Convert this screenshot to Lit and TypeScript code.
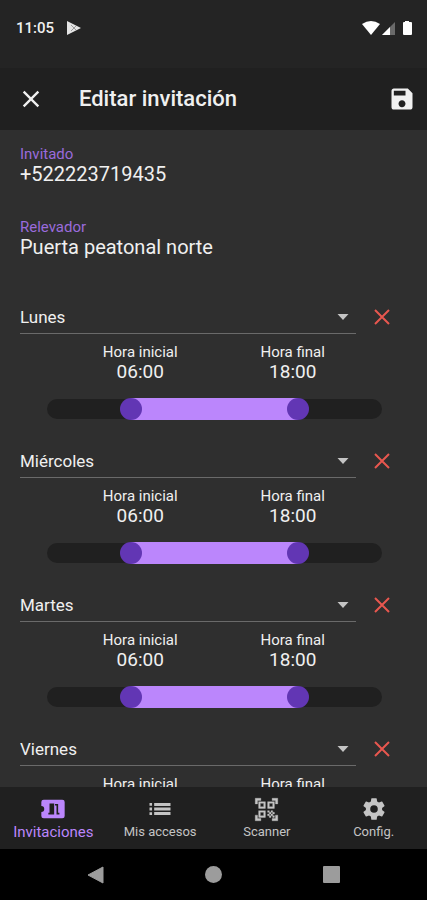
import { LitElement, html, css, svg } from "lit";
import { customElement, property, state } from "lit/decorators.js";
import { classMap } from "lit/directives/class-map.js";

const icons = {
  close: svg`<path d="M19 6.41 17.59 5 12 10.59 6.41 5 5 6.41 10.59 12 5 17.59 6.41 19 12 13.41 17.59 19 19 17.59 13.41 12z"/>`,
  save: svg`<path d="M17 3H5c-1.11 0-2 .9-2 2v14c0 1.1.89 2 2 2h14c1.1 0 2-.9 2-2V7l-4-4zm-5 16c-1.66 0-3-1.34-3-3s1.34-3 3-3 3 1.34 3 3-1.34 3-3 3zm3-10H5V5h10v4z"/>`,
  ticket: svg`<path fill-rule="evenodd" d="M4 4H20a2 2 0 0 1 2 2V18a2 2 0 0 1-2 2H4a2 2 0 0 1-2-2V14.500a2.500 2.500 0 0 0 0-5V6a2 2 0 0 1 2-2zM9 7.200V15.200H8V16.800H13V7.200zM13.700 7.700V8.900H15V16.800H17.500V15.200H16.400V7.700z"/>`,
  list: svg`<path d="M3 6.800h2.200v2.400H3zM3 10.800h2.200v2.400H3zM3 14.800h2.200v2.400H3zM7 6.800h14v2.600H7zM7 10.700h14v2.600H7zM7 14.600h14v2.600H7z"/>`,
  scan: svg`<path d="M9.500 6.500v3h-3v-3h3M11 5H5v6h6V5zm-1.500 9.500v3h-3v-3h3M11 13H5v6h6v-6zm6.500-6.500v3h-3v-3h3M19 5h-6v6h6V5zm-6 8h1.500v1.500H13V13zm1.500 1.500H16V16h-1.500v-1.500zM16 13h1.500v1.500H16V13zm-3 3h1.500v1.500H13V16zm1.500 1.500H16V19h-1.500v-1.500zM16 16h1.500v1.500H16V16zm1.500-1.500H19V16h-1.500v-1.500zm0 3H19V19h-1.500v-1.500zM22 7h-2V4h-3V2h5v5zm0 15v-5h-2v3h-3v2h5zM2 22h5v-2H4v-3H2v5zM2 2v5h2V4h3V2H2z" stroke="currentColor" stroke-width=".3"/>`,
  gear: svg`<path d="M12,15.5A3.5,3.5 0 0,1 8.5,12A3.5,3.5 0 0,1 12,8.5A3.5,3.5 0 0,1 15.5,12A3.5,3.5 0 0,1 12,15.5M19.43,12.97C19.47,12.65 19.5,12.33 19.5,12C19.5,11.67 19.47,11.34 19.43,11L21.54,9.37C21.73,9.22 21.78,8.95 21.66,8.73L19.66,5.27C19.54,5.05 19.27,4.96 19.05,5.05L16.56,6.05C16.04,5.66 15.5,5.32 14.87,5.07L14.5,2.42C14.46,2.18 14.25,2 14,2H10C9.75,2 9.54,2.18 9.5,2.42L9.13,5.07C8.5,5.32 7.96,5.66 7.44,6.05L4.95,5.05C4.73,4.96 4.46,5.05 4.34,5.27L2.34,8.73C2.21,8.95 2.27,9.22 2.46,9.37L4.57,11C4.53,11.34 4.5,11.67 4.5,12C4.5,12.33 4.53,12.65 4.57,12.97L2.46,14.63C2.27,14.78 2.21,15.05 2.34,15.27L4.34,18.73C4.46,18.95 4.73,19.03 4.95,18.95L7.44,17.94C7.96,18.34 8.5,18.68 9.13,18.93L9.5,21.58C9.54,21.82 9.75,22 10,22H14C14.25,22 14.46,21.82 14.5,21.58L14.87,18.93C15.5,18.67 16.04,18.34 16.56,17.94L19.05,18.95C19.27,19.03 19.54,18.95 19.66,18.73L21.66,15.27C21.78,15.05 21.73,14.78 21.54,14.63L19.43,12.97Z"/>`,
};

const icon = (name: keyof typeof icons, size: number) =>
  html`<svg width=${size} height=${size} viewBox="0 0 24 24" fill="currentColor" aria-hidden="true">${icons[name]}</svg>`;

const DAYS = ["Lunes", "Martes", "Miércoles", "Jueves", "Viernes", "Sábado", "Domingo"];

const clock = (hour: number) => `${String(hour).padStart(2, "0")}:00`;

@customElement("day-schedule")
class DaySchedule extends LitElement {
  @property() day = "Lunes";
  @state() from = 6;
  @state() to = 18;

  static styles = css`
    :host {
      display: block;
      padding-bottom: 24px;
    }
    .head {
      display: flex;
      height: 34px;
    }
    .pick {
      position: relative;
      flex: 1;
      display: flex;
      border-bottom: 1px solid #6a6a6a;
    }
    select {
      flex: 1;
      appearance: none;
      border: 0;
      padding: 0 24px 0 0;
      background: transparent;
      color: #f0f0f0;
      font: 17px Roboto, sans-serif;
      outline: none;
    }
    option {
      background: #2f2f2f;
    }
    .caret {
      position: absolute;
      right: 7px;
      top: 14px;
      pointer-events: none;
    }
    .remove {
      display: flex;
      align-items: center;
      justify-content: center;
      width: 51px;
      border: 0;
      padding: 0;
      background: transparent;
      color: #e8574f;
    }
    .hours {
      display: grid;
      grid-template-columns: 1fr 1fr;
      margin: 9px 38px 15px 44px;
      text-align: center;
      color: #f0f0f0;
    }
    .label {
      display: block;
      font-size: 15px;
      line-height: 18px;
    }
    .time {
      display: block;
      font-size: 19px;
      line-height: 22px;
    }
    .slider {
      position: relative;
      display: flex;
      align-items: center;
      height: 22px;
      margin: 0 25px 0 27px;
    }
    .track {
      flex: 1;
      height: 20px;
      border-radius: 10px;
      background: #202020;
    }
    .fill {
      position: absolute;
      top: 0;
      bottom: 0;
      background: #bb86fc;
    }
    input {
      position: absolute;
      left: -11px;
      top: 0;
      width: calc(100% + 22px);
      height: 22px;
      margin: 0;
      appearance: none;
      background: transparent;
      pointer-events: none;
      outline: none;
    }
    input::-webkit-slider-thumb {
      appearance: none;
      width: 22px;
      height: 22px;
      border-radius: 50%;
      background: #6236b4;
      pointer-events: auto;
    }
  `;

  render() {
    const left = (this.from / 24) * 100;
    const right = 100 - (this.to / 24) * 100;
    return html`
      <div class="head">
        <div class="pick">
          <select aria-label="Día">
            ${DAYS.map((d) => html`<option ?selected=${d === this.day}>${d}</option>`)}
          </select>
          <svg class="caret" width="12" height="6" viewBox="0 0 12 6" aria-hidden="true">
            <path d="M.5 0H11.500L6 6z" fill="#c4c4c4" />
          </svg>
        </div>
        <button class="remove" aria-label="Quitar día">
          <svg width="16" height="16" viewBox="0 0 16 16" fill="none" stroke="currentColor" stroke-width="2" aria-hidden="true">
            <path d="M1 1 15 15M15 1 1 15" />
          </svg>
        </button>
      </div>
      <div class="hours">
        <label for="from"><span class="label">Hora inicial</span><span class="time">${clock(this.from)}</span></label>
        <label for="to"><span class="label">Hora final</span><span class="time">${clock(this.to)}</span></label>
      </div>
      <div class="slider">
        <div class="track"></div>
        <div class="fill" style="left:${left}%;right:${right}%"></div>
        <input id="from" type="range" min="0" max="24" .value=${String(this.from)}
          @input=${(e: Event) => (this.from = Math.min(this.to, +(e.target as HTMLInputElement).value))} />
        <input id="to" type="range" min="0" max="24" .value=${String(this.to)}
          @input=${(e: Event) => (this.to = Math.max(this.from, +(e.target as HTMLInputElement).value))} />
      </div>
    `;
  }
}

@customElement("app-root")
class AppRoot extends LitElement {
  @state() tab = "Invitaciones";

  static styles = css`
    :host {
      display: flex;
      flex-direction: column;
      height: 100vh;
      background: #2f2f2f;
      color: #f0f0f0;
      font-family: Roboto, sans-serif;
    }
    button {
      border: 0;
      padding: 0;
      background: transparent;
      color: inherit;
      font-family: inherit;
    }
    svg {
      display: block;
    }
    .status {
      display: flex;
      align-items: center;
      flex: none;
      height: 40px;
      padding: 8px 15px 20px 16px;
      background: #242424;
    }
    .clock {
      font-size: 15px;
      font-weight: 500;
      line-height: 20px;
    }
    .play {
      margin-left: 13px;
      margin-right: auto;
    }
    .bar {
      display: flex;
      align-items: center;
      flex: none;
      height: 62px;
      padding: 0 11px 0 17px;
      background: #202020;
    }
    h1 {
      flex: 1;
      margin: 0 0 0 34px;
      font-size: 22px;
      font-weight: 500;
      line-height: 28px;
    }
    main {
      flex: 1;
      min-height: 0;
      overflow-y: auto;
      scrollbar-width: none;
      padding: 15px 20px 0;
    }
    dl {
      margin: 0 0 42px;
    }
    dt {
      color: #9a6bdc;
      font-size: 15px;
      line-height: 18px;
    }
    dd {
      margin: 0;
      font-size: 20px;
      line-height: 22px;
    }
    dd + dt {
      margin-top: 33px;
    }
    .tabs {
      display: grid;
      grid-template-columns: repeat(4, 1fr);
      flex: none;
      height: 62px;
      background: #202020;
      color: #c4c4c4;
    }
    .tab {
      display: flex;
      flex-direction: column;
      align-items: center;
      padding-top: 8px;
      font-size: 13px;
      line-height: 18px;
    }
    .glyph {
      display: flex;
      align-items: center;
      height: 28px;
    }
    .active {
      color: #bb86fc;
      font-size: 15px;
    }
    .system {
      display: grid;
      grid-template-columns: repeat(3, 1fr);
      flex: none;
      height: 51px;
      padding: 0 36px;
      background: #000;
      color: #9c9c9c;
    }
    .key {
      display: flex;
      align-items: center;
      justify-content: center;
    }
  `;

  render() {
    const tabs: [string, keyof typeof icons, number][] = [
      ["Invitaciones", "ticket", 28],
      ["Mis accesos", "list", 28],
      ["Scanner", "scan", 27],
      ["Config.", "gear", 26],
    ];
    return html`
      <div class="status">
        <span class="clock">11:05</span>
        <svg class="play" width="14" height="14" viewBox="0 0 14 14" aria-hidden="true">
          <path d="M0 0 14 7 0 14z" fill="#e4e4e4" />
          <path d="M4 4 9 9M4 10 9 5" stroke="#9a9a9a" fill="none" />
        </svg>
        <svg width="50" height="16" viewBox="0 0 50 16" aria-hidden="true">
          <path d="M0 4Q9-2 18 4L9 15z" fill="#fff" />
          <path d="M33 2V15H20z" fill="#6a6a6a" />
          <path d="M28 7V15H20z" fill="#fff" />
          <path d="M43 1h4v1h2q1 0 1 1V14q0 1-1 1H42q-1 0-1-1V3q0-1 1-1h1z" fill="#fff" />
        </svg>
      </div>
      <header class="bar">
        <button aria-label="Cerrar">${icon("close", 28)}</button>
        <h1>Editar invitación</h1>
        <button aria-label="Guardar">${icon("save", 28)}</button>
      </header>
      <main>
        <dl>
          <dt>Invitado</dt>
          <dd>+522223719435</dd>
          <dt>Relevador</dt>
          <dd>Puerta peatonal norte</dd>
        </dl>
        ${["Lunes", "Miércoles", "Martes", "Viernes"].map((d) => html`<day-schedule .day=${d}></day-schedule>`)}
      </main>
      <nav class="tabs">
        ${tabs.map(
          ([name, glyph, size]) => html`<button
            class=${classMap({ tab: true, active: name === this.tab })}
            @click=${() => (this.tab = name)}
          >
            <span class="glyph">${icon(glyph, size)}</span>${name}
          </button>`
        )}
      </nav>
      <div class="system">
        <button class="key" aria-label="Atrás">
          <svg width="17" height="18" viewBox="0 0 17 18"><path d="M16 1V17L1 9z" fill="currentColor" stroke="currentColor" stroke-linejoin="round" /></svg>
        </button>
        <button class="key" aria-label="Inicio">
          <svg width="17" height="17" viewBox="0 0 17 17"><circle cx="8.500" cy="8.500" r="8.500" fill="currentColor" /></svg>
        </button>
        <button class="key" aria-label="Recientes">
          <svg width="17" height="17" viewBox="0 0 17 17"><rect width="17" height="17" rx="1" fill="currentColor" /></svg>
        </button>
      </div>
    `;
  }
}
